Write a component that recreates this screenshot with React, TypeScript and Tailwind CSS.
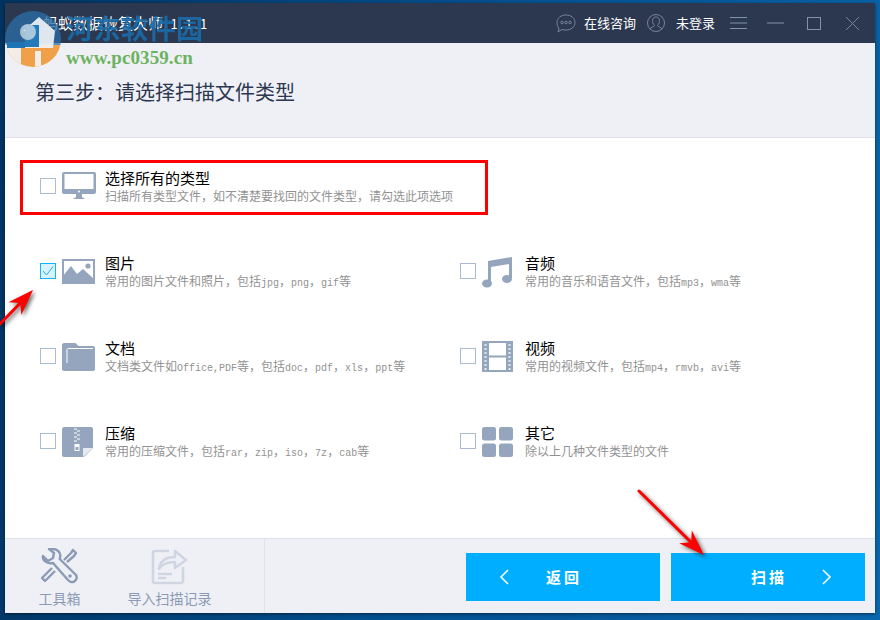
import React from "react";

const CJK = '"Noto Sans CJK SC", sans-serif';

// latin runs in the descriptions are half-width (6px per char at 12px cjk)
function Desc({ text }: { text: string }) {
  const parts = text.split(/([A-Za-z0-9,]+)/);
  return (
    <div className="h-[16px] whitespace-nowrap text-[12px] leading-[16px] text-[#929292]">
      {parts.map((p, i) =>
        /^[A-Za-z0-9,]+$/.test(p) ? (
          <span key={i} className="font-['Liberation_Mono',monospace] text-[10px]">{p}</span>
        ) : (
          <span key={i}>{p}</span>
        )
      )}
    </div>
  );
}

function Check({ checked }: { checked?: boolean }) {
  if (checked) {
    return (
      <div className="flex h-[16px] w-[16px] shrink-0 items-center justify-center border border-[#12b4ff] bg-[#d8f2ff]">
        <svg width="14" height="14" viewBox="0 0 14 14" fill="none">
          <path d="M2 7l3.5 4L12 2.5" stroke="#18b2fa" strokeWidth="1" />
        </svg>
      </div>
    );
  }
  return <div className="h-[16px] w-[16px] shrink-0 border border-[#abbcd2] bg-white" />;
}

const C = "#94a5bd";

const MonitorIcon = () => (
  <svg width="34" height="30" viewBox="0 0 34 30">
    <rect x="0" y="0" width="34" height="22" rx="2" fill={C} />
    <rect x="2.5" y="2" width="29" height="15" fill="#fff" />
    <circle cx="17" cy="19.5" r="1" fill="#fff" />
    <path d="M14 22h6v3l3 2H11l3-2z" fill={C} />
  </svg>
);
const ImageIcon = () => (
  <svg width="34" height="26" viewBox="0 0 34 26">
    <rect x="0" y="0" width="33" height="25" fill={C} />
    <rect x="2" y="2" width="29" height="21" fill="#fff" />
    <path d="M1 25V17l8-10 6 8 6-5 11 10v5z" fill={C} />
    <circle cx="26" cy="7" r="2.6" fill={C} />
  </svg>
);
const FolderIcon = () => (
  <svg width="33" height="28" viewBox="0 0 33 28">
    <path d="M2 0h11c2 0 2 3 4 3h14c1 0 2 1 2 2v21c0 1-1 2-2 2H2c-1 0-2-1-2-2V2C0 1 1 0 2 0z" fill={C} />
    <path d="M5 20V7c0-1 .5-1.500 1.500-1.500H31" fill="none" stroke="#fff" strokeWidth="1" />
  </svg>
);
const ZipIcon = () => (
  <svg width="31" height="30" viewBox="0 0 31 30">
    <path d="M2 0h27c1 0 2 1 2 2v19l-9 9H2c-1 0-2-1-2-2V2C0 1 1 0 2 0z" fill={C} />
    <path d="M21 30v-8c0-.6.400-1 1-1h9z" fill="#e6ebf2" />
    <path d="M12 2h3M15 4h3M12 6h3M15 8h3M12 10h3M15 12h3M12 14h3" stroke="#fff" strokeWidth="1.200" />
    <rect x="12.500" y="17" width="5" height="7" fill="#fff" />
    <rect x="13.500" y="20" width="3" height="3" fill={C} />
  </svg>
);
const MusicIcon = () => (
  <svg width="31" height="32" viewBox="0 0 31 32">
    <path d="M6 5L30 1v21h-3V8L9 11v17H6z" fill={C} />
    <ellipse cx="5" cy="27.500" rx="5" ry="4" fill={C} />
    <ellipse cx="25" cy="23" rx="5" ry="4" fill={C} />
  </svg>
);
const FilmIcon = () => (
  <svg width="31" height="31" viewBox="0 0 31 31">
    <rect width="31" height="31" fill={C} />
    <rect x="7" y="2" width="17" height="12.500" fill="#fff" />
    <rect x="7" y="16.500" width="17" height="12.500" fill="#fff" />
    {[3, 7, 11, 15, 19, 23, 27].map((y) => (
      <g key={y} fill="#e4e9f0">
        <rect x="2.500" y={y} width="2" height="2" />
        <rect x="26.500" y={y} width="2" height="2" />
      </g>
    ))}
  </svg>
);
const GridIcon = () => (
  <svg width="31" height="30" viewBox="0 0 31 30" fill={C}>
    <rect x="0" y="0" width="14" height="13.500" rx="2.500" />
    <rect x="17" y="0" width="14" height="13.500" rx="2.500" />
    <rect x="0" y="16.500" width="14" height="13.500" rx="2.500" />
    <rect x="17" y="16.500" width="14" height="13.500" rx="2.500" />
  </svg>
);

function Option({ icon, title, desc, checked, wide }: { icon: React.ReactNode; title: string; desc: string; checked?: boolean; wide?: boolean }) {
  return (
    <div className={`flex h-[85px] items-center ${wide ? "col-span-2" : ""}`}>
      <Check checked={checked} />
      <div className="ml-[6px] flex w-[34px] shrink-0 justify-start pt-[2px]">{icon}</div>
      <div className="ml-[9px]">
        <div className="h-[20px] text-[15px] leading-[20px] text-black">{title}</div>
        <Desc text={desc} />
      </div>
    </div>
  );
}

function Watermark() {
  return (
    <>
      <svg className="absolute left-[5px] top-[11px]" width="58" height="57" viewBox="0 0 58 57">
        <defs>
          <clipPath id="wm"><circle cx="28" cy="28" r="28" /></clipPath>
        </defs>
        <g clipPath="url(#wm)">
          <rect width="58" height="34" fill="#2a6fa8" opacity="0.75" />
          <rect y="34" width="58" height="24" fill="#f1a04a" />
          <path d="M0 34l34-4v-10H18l16-14 16 14-2 17H16v20h14V40h6v17H0z" fill="#f3f5f8" opacity="0.9" />
          <rect x="2" y="31" width="18" height="6" fill="#1d74b5" />
          <rect x="20" y="14" width="14" height="22" fill="#2479b8" />
          <circle cx="23" cy="21" r="8" fill="#dfe8f0" opacity="0.7" />
        </g>
      </svg>
      <div className="absolute left-[66px] top-[11px] whitespace-nowrap text-[27px] font-bold leading-[34px] tracking-[0.5px] text-[#1a6ca8] opacity-90">河东软件园</div>
      <div className="absolute left-[66px] top-[46px] whitespace-nowrap font-['Liberation_Serif',serif] text-[19px] font-bold leading-[24px] tracking-[0.1px] text-[#6db35f]">www.pc0359.cn</div>
    </>
  );
}

function Arrow({ x1, y1, x2, y2 }: { x1: number; y1: number; x2: number; y2: number }) {
  const a = Math.atan2(y2 - y1, x2 - x1);
  const pt = (d: number, off: number) => `${x2 - d * Math.cos(a) - off * Math.sin(a)},${y2 - d * Math.sin(a) + off * Math.cos(a)}`;
  return (
    <g>
      <line x1={x1} y1={y1} x2={x2 - 18 * Math.cos(a)} y2={y2 - 18 * Math.sin(a)} stroke="#f00" strokeWidth="3" strokeLinecap="round" />
      <polygon points={`${x2},${y2} ${pt(26, -9)} ${pt(18, 0)} ${pt(26, 9)}`} fill="#f00" />
    </g>
  );
}

export default function App() {
  return (
    <div className="relative h-[620px] w-[880px] overflow-hidden bg-[linear-gradient(100deg,#02335f_0%,#04508f_50%,#0a66ad_100%)] px-[5px] pb-[7px] pt-[3px]" style={{ fontFamily: CJK }}>
      <div className="flex h-full flex-col bg-white shadow-[0_1px_3px_rgba(0,0,0,0.5)]">
        {/* title bar */}
        <div className="flex h-[40px] shrink-0 items-center bg-[#2c3750] text-white">
          <div className="ml-[38px] whitespace-nowrap text-[15px]">蚂蚁数据恢复大师 <span className="ml-[4px] text-[13px] tracking-[2px]">1.1.1</span></div>
          <div className="ml-auto flex items-center">
            <svg width="20" height="19" viewBox="0 0 20 19" fill="none" stroke="#76859c" strokeWidth="1">
              <path d="M10 1c5 0 9 3 9 7.500S15 16 10 16c-1.500 0-2.500 0-4-.5L2 18l1-4C1.500 13 1 10.500 1 8.500 1 4 5 1 10 1z" />
              <circle cx="6" cy="8.500" r="1.300" /><circle cx="10" cy="8.500" r="1.300" /><circle cx="14" cy="8.500" r="1.300" />
            </svg>
            <span className="ml-[8px] text-[13px]">在线咨询</span>
            <svg className="ml-[11px]" width="18" height="18" viewBox="0 0 18 18" fill="none" stroke="#76859c" strokeWidth="1">
              <circle cx="9" cy="9" r="8.500" />
              <path d="M3 15c1-2 4-2 4.500-3.500C6 10 5.500 8 5.500 6.500 5.500 4.500 7 3 9 3s3.500 1.500 3.500 3.500c0 1.500-.5 3.500-2 5C11 13 14 13 15 15" />
            </svg>
            <span className="ml-[11px] text-[13px]">未登录</span>
            <svg className="ml-[15px]" width="17" height="12" viewBox="0 0 17 12" stroke="#8292aa" strokeWidth="1">
              <path d="M0 .5h17M0 6h17M0 11.500h17" />
            </svg>
            <svg className="ml-[20px]" width="17" height="2" viewBox="0 0 17 2" stroke="#8292aa" strokeWidth="1">
              <path d="M0 1h17" />
            </svg>
            <div className="ml-[23px] h-[13px] w-[14px] border border-[#8292aa]" />
            <svg className="ml-[25px] mr-[16px]" width="13" height="13" viewBox="0 0 13 13" stroke="#76859c" strokeWidth="1">
              <path d="M0 0l13 13M13 0L0 13" />
            </svg>
          </div>
        </div>

        {/* step heading */}
        <div className="flex h-[95px] shrink-0 border-b border-[#e0e1e6] bg-[#eff0f6] pl-[30px] pt-[33px]">
          <h1 className="text-[20px] font-normal leading-[32px] text-[#2c3750]">第三步：请选择扫描文件类型</h1>
        </div>

        {/* file types */}
        <div className="grid flex-1 grid-cols-[420px_1fr] content-start px-[35px] pt-[5px]">
          <Option wide icon={<MonitorIcon />} title="选择所有的类型" desc="扫描所有类型文件，如不清楚要找回的文件类型，请勾选此项选项" />
          <Option checked icon={<ImageIcon />} title="图片" desc="常用的图片文件和照片，包括jpg，png，gif等" />
          <Option icon={<MusicIcon />} title="音频" desc="常用的音乐和语音文件，包括mp3，wma等" />
          <Option icon={<FolderIcon />} title="文档" desc="文档类文件如Office,PDF等，包括doc，pdf，xls，ppt等" />
          <Option icon={<FilmIcon />} title="视频" desc="常用的视频文件，包括mp4，rmvb，avi等" />
          <Option icon={<ZipIcon />} title="压缩" desc="常用的压缩文件，包括rar，zip，iso，7z，cab等" />
          <Option icon={<GridIcon />} title="其它" desc="除以上几种文件类型的文件" />
        </div>

        {/* footer */}
        <div className="flex h-[75px] shrink-0 border-t border-[#dfe0e5] bg-[#eff0f6]">
          <div className="flex w-[260px] border-r border-[#e2e3e8]">
            <div className="ml-[34px] flex w-[41px] flex-col items-center pt-[9px]">
              <svg width="37" height="37" viewBox="0 0 37 37" fill="none" stroke="#8c9bb5" strokeWidth="2.400" strokeLinejoin="round">
                <path d="M2 8l5 5 5-3 1-5-5-4c5-1 10 1 11 5 .6 2 .3 3.500-.3 5L35 27c2 3-1 8-5 7-1 0-2-1-3-2L12 15c-5 1-11-2-10-7z" />
                <circle cx="29" cy="28" r="1.800" fill="#8c9bb5" stroke="none" />
                <path d="M23 12l7-7 2-3 3 3-2 3-7 6M14 23L5 32l-1 1-2-2-1-1 10-10" />
              </svg>
              <span className="mt-[3px] whitespace-nowrap text-[14px] leading-[20px] text-[#8c9bb5]">工具箱</span>
            </div>
            <div className="ml-[47px] flex w-[85px] flex-col items-center pt-[9px]">
              <svg width="37" height="37" viewBox="0 0 37 37" fill="none" stroke="#cfd6e2" strokeWidth="2.600" strokeLinejoin="round">
                <path d="M18 3H4C2.500 3 2 4 2 5v28c0 1 .5 2 2 2h26c1 0 2-1 2-2V19" />
                <path d="M8 21c1-7 6-12 16-12V3l11 9-11 8v-6c-8 0-13 2-16 7z" />
                <path d="M7 26h14M7 30h8" />
              </svg>
              <span className="mt-[3px] whitespace-nowrap text-[14px] leading-[20px] text-[#8c9bb5]">导入扫描记录</span>
            </div>
          </div>
          <div className="ml-auto flex gap-[11px] pr-[10px] pt-[14px]">
            <button className="relative flex h-[48px] w-[194px] items-center bg-[#00aeff] pl-[33px] text-white">
              <svg width="10" height="16" viewBox="0 0 10 16" fill="none" stroke="#fff" strokeWidth="1.600"><path d="M9 1L2 8l7 7" /></svg>
              <span className="ml-[37px] text-[15px] font-bold tracking-[3px]">返回</span>
            </button>
            <button className="relative flex h-[48px] w-[194px] items-center bg-[#00aeff] pl-[80px] text-white">
              <span className="text-[15px] font-bold tracking-[3px]">扫描</span>
              <svg className="ml-[35px]" width="10" height="16" viewBox="0 0 10 16" fill="none" stroke="#fff" strokeWidth="1.600"><path d="M1 1l7 7-7 7" /></svg>
            </button>
          </div>
        </div>
      </div>

      {/* screenshot annotations */}
      <div className="absolute left-[20px] top-[160px] h-[55px] w-[468px] border-[3px] border-[#f00]" />
      <Watermark />
      <svg className="absolute left-0 top-0 drop-shadow-[2px_2px_2px_rgba(0,0,0,0.6)]" width="880" height="620" viewBox="0 0 880 620">
        <Arrow x1={-2} y1={326} x2={33} y2={290} />
        <Arrow x1={639} y1={491} x2={704} y2={555} />
      </svg>
    </div>
  );
}
